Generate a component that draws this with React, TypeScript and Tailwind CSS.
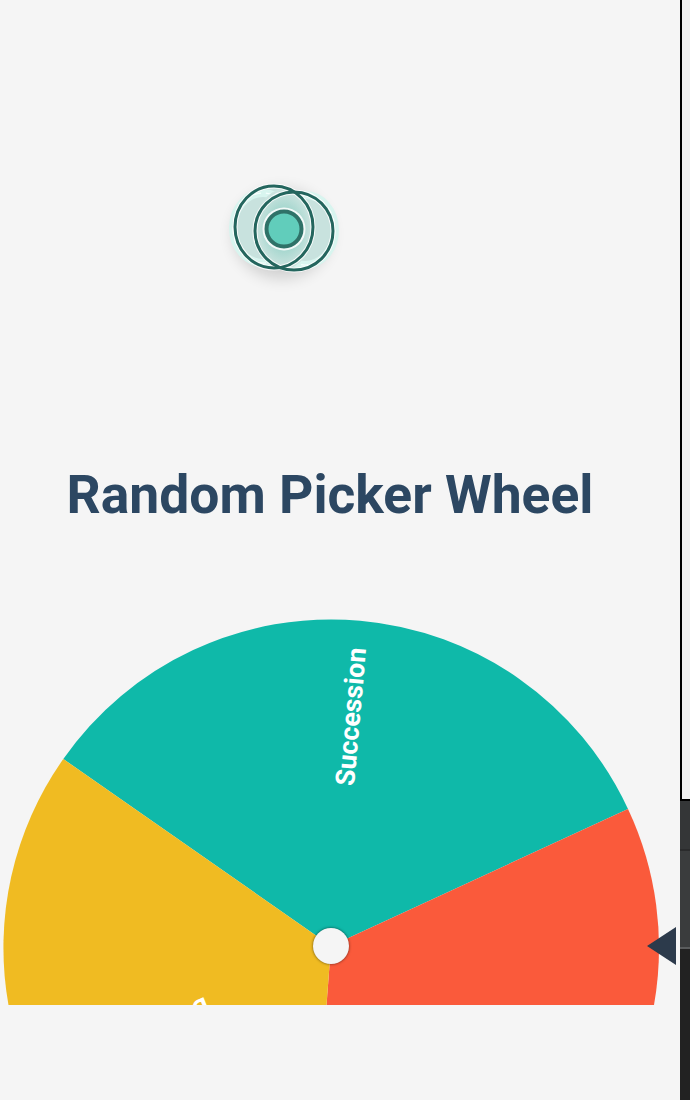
const Logo = () => (
  <svg width="120" height="110" viewBox="0 0 120 110" className="overflow-visible">
    <defs>
      <radialGradient id="lens" cx="50%" cy="50%" r="50%">
        <stop offset="0%" stopColor="#8fd3c8" />
        <stop offset="55%" stopColor="#a9d8d0" />
        <stop offset="100%" stopColor="#cfe5e1" />
      </radialGradient>
      <filter id="soft" x="-40%" y="-40%" width="180%" height="180%">
        <feGaussianBlur stdDeviation="8" />
      </filter>
    </defs>
    <ellipse cx="58" cy="60" rx="48" ry="44" fill="#000" opacity="0.16" filter="url(#soft)" />
    <ellipse cx="50" cy="53" rx="39" ry="41" fill="#c8e2de" />
    <ellipse cx="70" cy="57" rx="39" ry="39" fill="#c8e2de" />
    <ellipse cx="39" cy="54" rx="30" ry="35" fill="none" stroke="#d8f5ef" strokeWidth="8" />
    <ellipse cx="81" cy="56" rx="30" ry="35" fill="none" stroke="#d8f5ef" strokeWidth="8" />
    <ellipse cx="39" cy="54" rx="30" ry="35" fill="none" stroke="#f5fffd" strokeWidth="1.2" strokeDasharray="7 5" />
    <ellipse cx="81" cy="56" rx="30" ry="35" fill="none" stroke="#f5fffd" strokeWidth="1.2" strokeDasharray="7 5" />
    <ellipse cx="60" cy="55" rx="29" ry="40" fill="url(#lens)" />
    <ellipse cx="50" cy="53" rx="39" ry="41" fill="none" stroke="#ffffff" strokeWidth="5" opacity="0.85" />
    <ellipse cx="70" cy="57" rx="39" ry="39" fill="none" stroke="#ffffff" strokeWidth="5" opacity="0.85" />
    <ellipse cx="50" cy="53" rx="39" ry="41" fill="none" stroke="#24665e" strokeWidth="3" />
    <ellipse cx="70" cy="57" rx="39" ry="39" fill="none" stroke="#24665e" strokeWidth="3" />
    <circle cx="60" cy="55" r="21.5" fill="#fff" opacity="0.85" />
    <circle cx="60" cy="55" r="17.5" fill="#61cdbb" stroke="#2f7268" strokeWidth="4" />
  </svg>
);

const Wheel = () => (
  <svg width="660" height="386" viewBox="0 0 660 386" className="block">
    <path d="M331 327 L63.3 140 A327 327 0 0 1 628 190 Z" fill="#0fb9a9" />
    <path d="M331 327 L628 190 A327 327 0 0 1 654 386 L326.5 386 Z" fill="#fa5a3b" />
    <path d="M331 327 L326.5 386 L8.5 386 A327 327 0 0 1 63.3 140 Z" fill="#f0bb22" />
  </svg>
);

export default function App() {
  return (
    <div className="h-[1100px] w-[690px] overflow-hidden bg-[#f5f5f5] flex" style={{ fontFamily: 'Roboto, sans-serif' }}>
      <main className="relative w-[680px] h-full shrink-0">
        <div className="flex justify-center pt-[174px] pr-[118px] h-[466px]">
          <div className="ml-[6px]"><Logo /></div>
        </div>
        <h1 className="absolute top-[464px] left-0 w-[660px] text-center text-[53.4px] leading-[62px] font-bold text-[#2c4762]">
          Random Picker Wheel
        </h1>
        <div className="absolute left-0 top-[619px] w-[680px] h-[386px] overflow-hidden">
          <Wheel />
          <span className="absolute left-[283px] top-[84px] w-[136px] text-center rotate-[-85deg] text-white text-[26.8px] leading-[30px] font-bold whitespace-nowrap">
            Succession
          </span>
          <span className="absolute left-[57px] top-[400px] w-[160px] text-center rotate-[158deg] text-white text-[26px] leading-[30px] font-bold whitespace-nowrap">
            Development
          </span>
          <div className="absolute left-[313px] top-[309px] w-9 h-9 rounded-full bg-[#f5f5f5] shadow-[0_0_3px_rgba(0,0,0,0.6)]" />
          <div className="absolute left-[647px] top-[308px] w-0 h-0 border-y-[19px] border-y-transparent border-r-[29px] border-r-[#2c3a4b]" />
        </div>
      </main>
      <aside className="w-[10px] h-full flex flex-col">
        <div className="h-[801px] bg-[#f1f1f1] border-l-2 border-b-2 border-black" />
        <div className="h-[50px] bg-[#343637] border-b-2 border-[#2a2b2c]" />
        <div className="h-[98px] bg-[#3a3c3d] border-b-2 border-[#5a5c5d]" />
        <div className="flex-1 bg-[#222222]" />
      </aside>
    </div>
  );
}
